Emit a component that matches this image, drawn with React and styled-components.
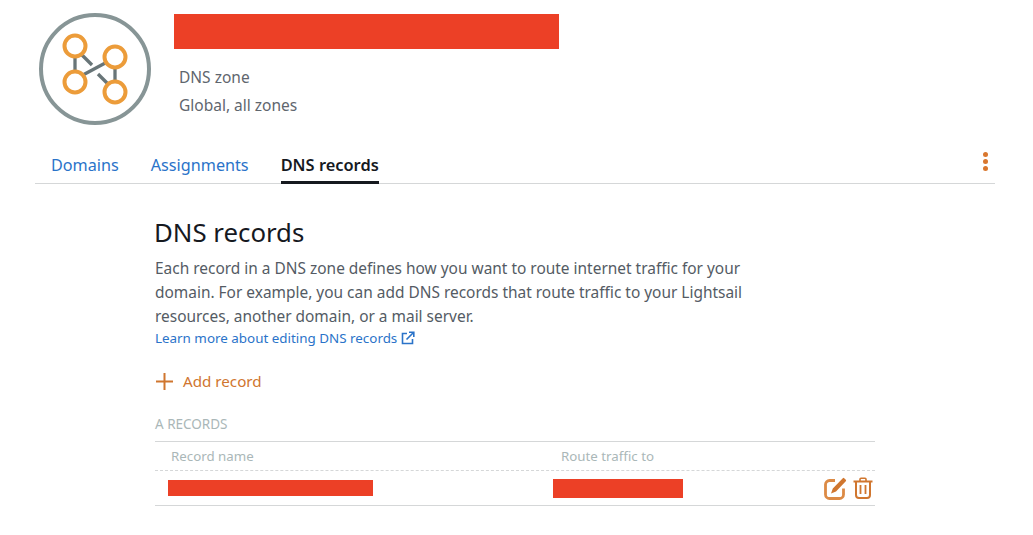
import styled, { createGlobalStyle } from "styled-components";

const GlobalStyle = createGlobalStyle`
  html, body {
    margin: 0;
    background: #fff;
    font-family: "Noto Sans", "Liberation Sans", sans-serif;
    color: #545b64;
  }
`;

const Page = styled.div`
  width: 1033px;
  height: 535px;
  padding: 13px 38px 0 35px;
  box-sizing: border-box;
  overflow: hidden;
`;

const Header = styled.header`
  display: flex;
  gap: 23px;
  padding-left: 4px;
  height: 128px;
`;

const ZoneInfo = styled.div`
  display: flex;
  flex-direction: column;
  align-items: flex-start;
  padding-top: 1px;
`;

const Redacted = styled.div`
  background: #ec4026;
  width: ${(p) => p.$w}px;
  height: ${(p) => p.$h}px;
`;

const MetaList = styled.div`
  margin-top: 14px;
  padding-left: 5px;
`;

const Meta = styled.div`
  font-size: 15.5px;
  line-height: 28px;
  color: #5f666e;
`;

const Tabs = styled.nav`
  display: flex;
  align-items: flex-end;
  gap: 32px;
  height: 42px;
  padding-left: 16px;
  border-bottom: 1px solid #d5d7d8;
`;

const Tab = styled.a`
  font-size: ${(p) => (p.$active ? 16.4 : 16.2)}px;
  line-height: 24px;
  padding-bottom: 4px;
  margin-bottom: -1px;
  color: ${(p) => (p.$active ? "#16191f" : "#2a73c9")};
  font-weight: ${(p) => (p.$active ? 600 : 400)};
  border-bottom: 3px solid ${(p) => (p.$active ? "#16191f" : "transparent")};
`;

const Dots = styled.div`
  margin-left: auto;
  align-self: center;
  display: flex;
  flex-direction: column;
  gap: 2px;
  margin-right: 7px;
  margin-top: -2px;
`;

const Dot = styled.span`
  width: 5px;
  height: 5px;
  border-radius: 50%;
  background: #d9772f;
`;

const Content = styled.main`
  width: 720px;
  margin-left: 120px;
  padding-top: 31px;
`;

const Title = styled.h1`
  margin: 0 0 0 -1px;
  font-size: 25.8px;
  line-height: 34px;
  font-weight: 400;
  color: #16191f;
`;

const Description = styled.p`
  margin: 7px 0 0;
  width: 600px;
  font-size: 15.45px;
  line-height: 24px;
  color: #545b64;
`;

const LearnMore = styled.a`
  display: flex;
  align-items: center;
  gap: 4px;
  font-size: 13.4px;
  line-height: 20px;
  color: #2a73c9;
`;

const AddRecord = styled.a`
  display: flex;
  align-items: center;
  gap: 9px;
  margin-top: 21px;
  height: 24px;
  font-size: 15.2px;
  color: #d0762f;
`;

const SectionLabel = styled.div`
  margin-top: 21px;
  font-size: 13.5px;
  line-height: 20px;
  color: #aab7b8;
`;

const Table = styled.div`
  margin-top: 7px;
  border-top: 1px solid #d5d7d8;
  border-bottom: 1px solid #d5d7d8;
`;

const HeadRow = styled.div`
  display: grid;
  grid-template-columns: 390px 1fr;
  height: 28px;
  align-items: center;
  padding-left: 16px;
  border-bottom: 1px dashed #d5d7d8;
  font-size: 13.3px;
  color: #aab7b8;
`;

const BodyRow = styled.div`
  display: grid;
  grid-template-columns: 385px 1fr auto;
  align-items: center;
  height: 34px;
  padding: 0 2px 0 13px;
`;

const Actions = styled.div`
  display: flex;
  align-items: center;
  gap: 6px;
`;

const ZoneIcon = () => (
  <svg width="112" height="112" viewBox="0 0 112 112">
    <circle cx="56" cy="56" r="54" fill="#fff" stroke="#879596" strokeWidth="4" />
    <g stroke="#687578" strokeWidth="3.3" fill="none">
      <path d="M36 40V62" />
      <path d="M43 42L53 52" />
      <path d="M59 61L70 72" />
      <path d="M42 63L70 48" />
      <path d="M76 50V73" />
    </g>
    <g stroke="#ec9c3a" strokeWidth="4" fill="#fff">
      <circle cx="36" cy="33" r="10.5" />
      <circle cx="76" cy="44" r="10.5" />
      <circle cx="36" cy="69" r="10.5" />
      <circle cx="76" cy="79" r="10.5" />
    </g>
  </svg>
);

const ExternalIcon = () => (
  <svg width="14" height="14" viewBox="0 0 14 14" fill="none" stroke="#2a73c9" strokeWidth="1.6">
    <path d="M6 2.5H1.5V12.5H11.5V8" />
    <path d="M5.5 8.5L12.5 1.5M8 1.2H12.8V6" />
  </svg>
);

const PlusIcon = () => (
  <svg width="19" height="19" viewBox="0 0 19 19" stroke="#d0762f" strokeWidth="2">
    <path d="M9.5 1V18M1 9.5H18" />
  </svg>
);

const EditIcon = () => (
  <svg width="23" height="23" viewBox="0 0 23 23" fill="none">
    <path d="M11 3.5H5.5a4 4 0 0 0-4 4v10a4 4 0 0 0 4 4h10a4 4 0 0 0 4-4v-6" stroke="#dc8a45" strokeWidth="2.8" />
    <path d="M7 16.5l1.8-5L18.8 1.2a1 1 0 0 1 1.4 0l1.6 1.6a1 1 0 0 1 0 1.4L12 14.5z" fill="#d0762f" />
  </svg>
);

const TrashIcon = () => (
  <svg width="20" height="22" viewBox="0 0 20 22" fill="none" stroke="#d0762f">
    <path d="M0.5 4.5H19.5" strokeWidth="2" />
    <path d="M7 4V2.2A1 1 0 0 1 8 1.2H12a1 1 0 0 1 1 1V4" strokeWidth="1.6" />
    <path d="M3 5V18a3 3 0 0 0 3 3H14a3 3 0 0 0 3-3V5" strokeWidth="2" />
    <path d="M7.5 8V17M12.5 8V17" strokeWidth="1.8" />
  </svg>
);

export default function App() {
  return (
    <Page>
      <GlobalStyle />
      <Header>
        <ZoneIcon />
        <ZoneInfo>
          <Redacted $w={385} $h={35} />
          <MetaList>
            <Meta>DNS zone</Meta>
            <Meta>Global, all zones</Meta>
          </MetaList>
        </ZoneInfo>
      </Header>
      <Tabs>
        <Tab>Domains</Tab>
        <Tab>Assignments</Tab>
        <Tab $active>DNS records</Tab>
        <Dots>
          <Dot />
          <Dot />
          <Dot />
        </Dots>
      </Tabs>
      <Content>
        <Title>DNS records</Title>
        <Description>
          Each record in a DNS zone defines how you want to route internet traffic for your
          domain. For example, you can add DNS records that route traffic to your Lightsail
          resources, another domain, or a mail server.
        </Description>
        <LearnMore>
          Learn more about editing DNS records <ExternalIcon />
        </LearnMore>
        <AddRecord>
          <PlusIcon />
          Add record
        </AddRecord>
        <SectionLabel>A RECORDS</SectionLabel>
        <Table>
          <HeadRow>
            <span>Record name</span>
            <span>Route traffic to</span>
          </HeadRow>
          <BodyRow>
            <Redacted $w={205} $h={16} />
            <Redacted $w={130} $h={19} />
            <Actions>
              <EditIcon />
              <TrashIcon />
            </Actions>
          </BodyRow>
        </Table>
      </Content>
    </Page>
  );
}
